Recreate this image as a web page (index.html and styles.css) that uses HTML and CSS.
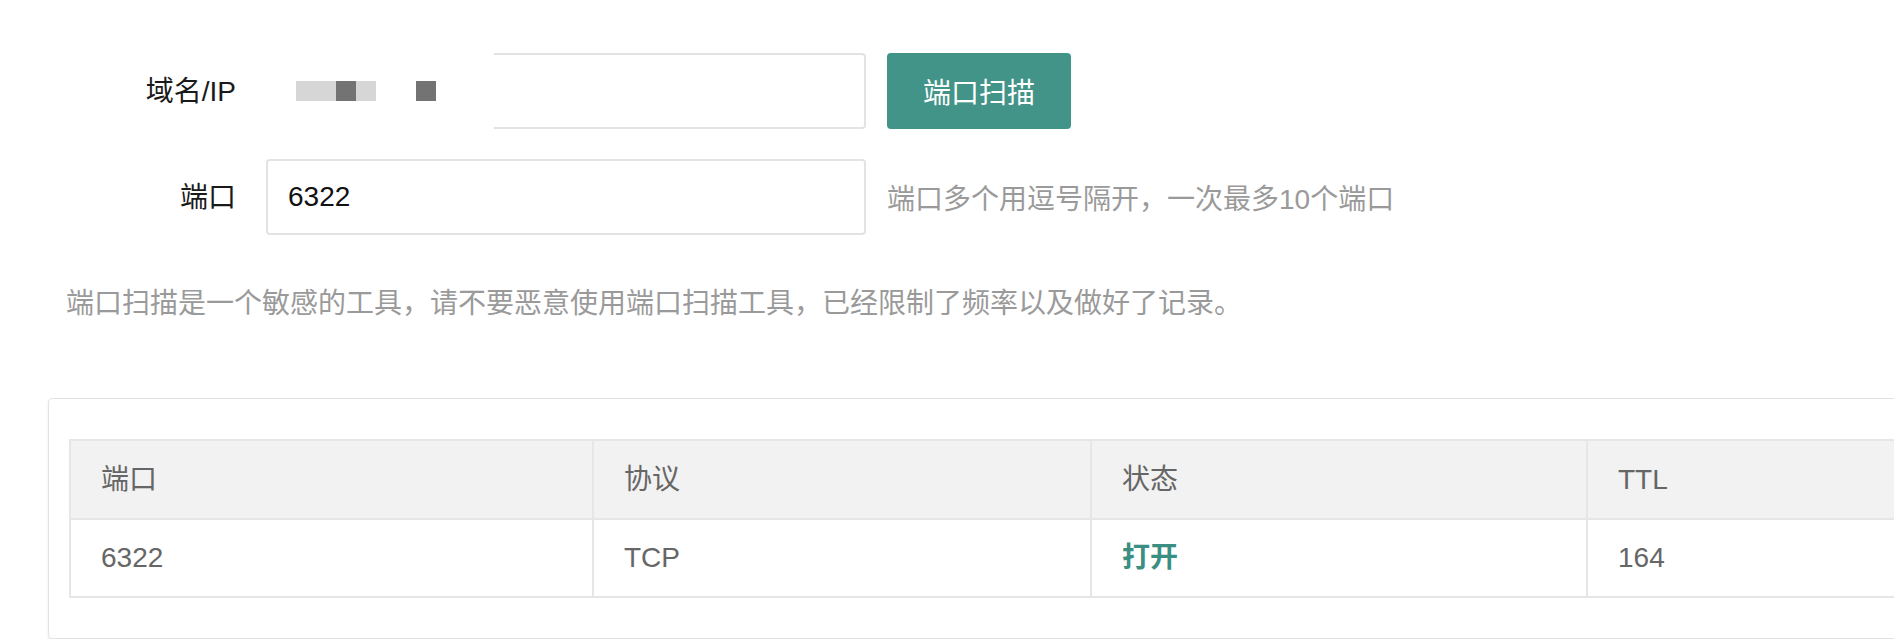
FILE: index.html
```html
<!DOCTYPE html>
<html lang="zh-CN">
<head>
<meta charset="utf-8">
<title>端口扫描</title>
<link rel="stylesheet" href="styles.css">
</head>
<body>
<div class="page">
  <form class="scan-form">
    <div class="form-row">
      <label class="label">域名/IP</label>
      <div class="field-wrap">
        <input class="field" type="text" value="">
        <div class="redact">
          <span class="blk light"></span><span class="blk dark"></span><span class="blk light short"></span>
          <span class="gap"></span><span class="blk dark"></span>
        </div>
      </div>
      <button type="button" class="btn">端口扫描</button>
    </div>
    <div class="form-row">
      <label class="label">端口</label>
      <div class="field-wrap">
        <input class="field" type="text" value="6322">
      </div>
      <span class="hint">端口多个用逗号隔开，一次最多10个端口</span>
    </div>
  </form>
  <p class="notice">端口扫描是一个敏感的工具，请不要恶意使用端口扫描工具，已经限制了频率以及做好了记录。</p>
  <div class="card">
    <table class="result">
      <colgroup>
        <col class="c1"><col class="c2"><col class="c3"><col class="c4">
      </colgroup>
      <thead>
        <tr><th>端口</th><th>协议</th><th>状态</th><th>TTL</th></tr>
      </thead>
      <tbody>
        <tr><td>6322</td><td>TCP</td><td><strong class="open">打开</strong></td><td>164</td></tr>
      </tbody>
    </table>
  </div>
</div>
</body>
</html>
```
FILE: styles.css
```css
html, body {
  margin: 0;
  padding: 0;
  background: #fff;
  overflow: hidden;
}
body {
  font-family: "Liberation Sans", "Noto Sans CJK SC", sans-serif;
  font-size: 28px;
  color: #222;
}
.page {
  padding: 53px 0 0 46px;
}
.scan-form {
  display: flex;
  flex-direction: column;
  gap: 30px;
}
.form-row {
  display: flex;
  align-items: center;
  height: 76px;
}
.label {
  width: 160px;
  padding: 2px 30px 0;
  text-align: right;
  color: #1a1a1a;
  line-height: 40px;
}
.field-wrap {
  position: relative;
  width: 600px;
  height: 76px;
}
.field {
  box-sizing: border-box;
  width: 100%;
  height: 76px;
  margin: 0;
  padding: 0 20px;
  border: 2px solid #e3e3e3;
  border-radius: 4px;
  font-family: "Liberation Sans", "Noto Sans CJK SC", sans-serif;
  font-size: 28px;
  color: #111;
  background: #fff;
  outline: none;
}
.redact {
  position: absolute;
  left: -8px;
  top: -4px;
  width: 236px;
  height: 84px;
  background: #fff;
  display: flex;
  align-items: center;
  padding-left: 38px;
  box-sizing: border-box;
}
.blk {
  display: block;
  width: 40px;
  height: 20px;
  background: #d6d6d6;
}
.blk.dark {
  width: 20px;
  background: #737373;
}
.blk.short {
  width: 20px;
}
.gap {
  width: 40px;
}
.btn {
  margin-left: 21px;
  width: 184px;
  height: 76px;
  border: 0;
  border-radius: 4px;
  background: #429488;
  color: #fff;
  font-family: "Liberation Sans", "Noto Sans CJK SC", sans-serif;
  font-size: 28px;
  padding: 0;
}
.hint {
  margin-left: 21px;
  color: #9a9a9a;
}
.notice {
  margin: 49px 0 0 20px;
  line-height: 40px;
  color: #9a9a9a;
}
.card {
  margin: 74px 0 0 2px;
  width: 2100px;
  padding: 40px 20px;
  border: 1px solid #e3e3e3;
  border-radius: 4px;
  box-shadow: 0 2px 3px rgba(0, 0, 0, 0.08);
  background: #fff;
}
.result {
  border-collapse: collapse;
  table-layout: fixed;
  width: 2020px;
  color: #666;
}
.c1 { width: 523px; }
.c2 { width: 498px; }
.c3 { width: 496px; }
.c4 { width: 503px; }
.result th,
.result td {
  border: 2px solid #e6e6e6;
  padding: 0 30px;
  text-align: left;
  font-weight: 400;
  line-height: 40px;
  box-sizing: border-box;
}
.result th {
  height: 79px;
  background: #f2f2f2;
}
.result td {
  height: 78px;
}
.open {
  color: #3a8f82;
  font-weight: 700;
}
```
